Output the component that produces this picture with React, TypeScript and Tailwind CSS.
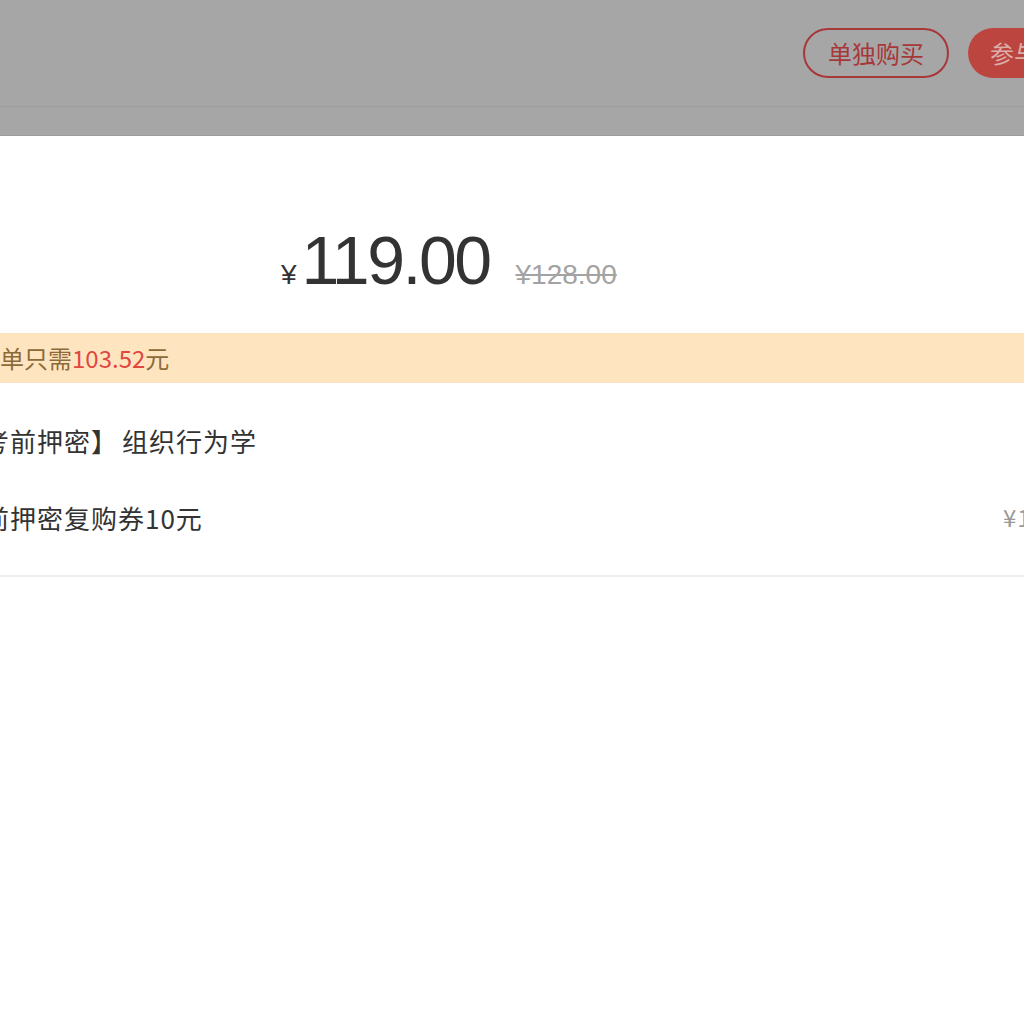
import React from "react";

const cjk = { fontFamily: '"Noto Sans CJK SC", "Noto Sans", sans-serif' };
const latin = { fontFamily: '"Liberation Sans", Arial, sans-serif' };

export default function App() {
  return (
    <div className="w-[1024px] h-[1024px] overflow-hidden bg-white" style={cjk}>
      {/* dimmed header */}
      <div className="bg-[#a6a6a6]">
        <div className="h-[107px] flex items-center justify-end border-b border-[#9d9d9d] overflow-hidden">
          <button className="shrink-0 w-[146px] h-[50px] rounded-full border-2 border-[#a6383a] text-[#a6383a] text-[24px] flex items-center justify-center">
            单独购买
          </button>
          <button className="shrink-0 ml-[19px] mr-[-100px] w-[156px] h-[50px] rounded-full bg-[#bd4540] text-[#dcaeaa] text-[24px] flex items-center pl-[22px]">
            参与拼团
          </button>
        </div>
        <div className="h-[29px] border-b border-[#9c9c9c]" />
      </div>

      {/* price */}
      <div className="pt-[90px] pl-[281px] flex items-baseline text-[#333333]" style={latin}>
        <span className="text-[28px] leading-none">¥</span>
        <span className="ml-[5px] text-[68px] leading-none tracking-[-2.5px]">119.00</span>
        <span className="ml-[26px] text-[28px] leading-none text-[#a3a3a3] line-through">¥128.00</span>
      </div>

      {/* banner */}
      <div className="mt-[39px] h-[50px] bg-[#fee5bf] flex items-center text-[24px] text-[#8d6a3a] whitespace-nowrap">
        <span>单只需</span>
        <span className="text-[#e0473f]">103.52</span>
        <span>元</span>
      </div>

      {/* rows */}
      <div className="pt-[19px] pb-[19px] border-b-2 border-[#eeeeee] overflow-hidden">
        <div className="h-[76px] flex items-center text-[26px] tracking-[1px] text-[#333333] whitespace-nowrap">
          <span className="ml-[-44px]">【考前押密】</span>
          <span className="ml-[4px]">组织行为学</span>
        </div>
        <div className="h-[78px] flex items-center text-[26px] tracking-[1px] text-[#333333] whitespace-nowrap">
          <span className="ml-[-44px]">考前押密复购券10元</span>
          <span className="ml-auto mr-[-60px] w-[81px] shrink-0 text-[24px] text-[#999999]">¥10.00</span>
        </div>
      </div>
    </div>
  );
}
